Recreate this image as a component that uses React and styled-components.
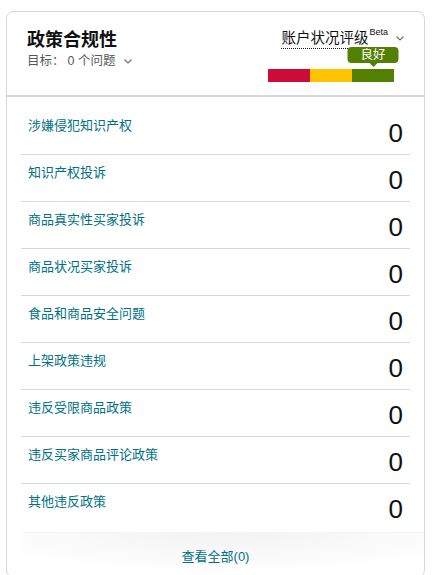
import React from "react";
import styled, { createGlobalStyle } from "styled-components";

const GlobalStyle = createGlobalStyle`
  body {
    margin: 0;
    background: #fff;
    font-family: "Liberation Sans", Arial, "Noto Sans CJK SC", sans-serif;
    color: #0f1111;
  }
`;

const Page = styled.div`
  padding: 11px 0 0 6px;
  width: 419px;
`;

const Card = styled.section`
  border: 1px solid #d5d9d9;
  border-radius: 8px;
  background: #fff;
  overflow: hidden;
`;

const Header = styled.header`
  display: flex;
  justify-content: space-between;
  align-items: flex-start;
  padding: 16px 20px 13px 20px;
  border-bottom: 2px solid #d5d9d9;
`;

const TitleBlock = styled.div`
  display: flex;
  flex-direction: column;
`;

const Title = styled.h2`
  margin: 0;
  font-size: 18px;
  line-height: 24px;
  font-weight: 700;
  color: #0f1111;
`;

const Goal = styled.div`
  display: flex;
  align-items: center;
  font-size: 12.5px;
  line-height: 18px;
  color: #565959;
  span + span {
    margin-left: 3px;
  }
`;

const Chevron = styled.svg`
  width: 8px;
  height: 5px;
  margin-left: ${(p) => p.$gap || 8}px;
  stroke: #6f7373;
  fill: none;
  stroke-width: 1.2;
`;

const RatingBlock = styled.div`
  display: flex;
  flex-direction: column;
  align-items: flex-end;
`;

const RatingLabel = styled.div`
  display: flex;
  align-items: center;
  height: 20px;
`;

const RatingText = styled.span`
  font-size: 14.5px;
  line-height: 20px;
  color: #0f1111;
  border-bottom: 1px dotted #0f1111;
  display: inline-flex;
  align-items: flex-start;
`;

const Beta = styled.sup`
  font-size: 9px;
  line-height: 10px;
  margin-left: 1px;
  margin-top: -1px;
  color: #0f1111;
`;

const Bars = styled.div`
  display: flex;
  margin-top: 21px;
  margin-right: 10px;
`;

const Segment = styled.div`
  position: relative;
  width: 42px;
  height: 13px;
  background: ${(p) => p.$color};
`;

const Badge = styled.div`
  position: absolute;
  bottom: calc(100% + 6px);
  left: 50%;
  transform: translateX(-50%);
  width: 51px;
  height: 16px;
  border-radius: 4px;
  background: #538000;
  color: #fff;
  font-size: 12.5px;
  line-height: 17px;
  text-align: center;
  &::after {
    content: "";
    position: absolute;
    top: 100%;
    left: 50%;
    margin-left: -4px;
    border-left: 4px solid transparent;
    border-right: 4px solid transparent;
    border-top: 4px solid #538000;
  }
`;

const List = styled.ul`
  list-style: none;
  margin: 0;
  padding: 11px 14px 0;
`;

const Row = styled.li`
  display: flex;
  justify-content: space-between;
  align-items: flex-start;
  height: 47px;
  box-sizing: border-box;
  padding: 8px 7px 0;
  border-bottom: 1px solid ${(p) => (p.$last ? "transparent" : "#d5d9d9")};
`;

const Label = styled.a`
  font-size: 13px;
  line-height: 19px;
  color: #007185;
  text-decoration: none;
  cursor: pointer;
`;

const Count = styled.span`
  font-size: 26px;
  line-height: 30px;
  margin-top: 2px;
  color: #0f1111;
`;

const Footer = styled.div`
  position: relative;
  margin-top: 1px;
  height: 45px;
  display: flex;
  align-items: center;
  justify-content: center;
  &::before {
    content: "";
    position: absolute;
    top: 0;
    left: 16px;
    right: 0;
    height: 40px;
    background: radial-gradient(ellipse 65% 100% at 50% 0%, rgba(0, 0, 0, 0.05), rgba(0, 0, 0, 0) 100%);
    border-top: 1px solid rgba(0, 0, 0, 0.04);
  }
`;

const FooterLink = styled.a`
  position: relative;
  font-size: 13px;
  color: #007185;
  text-decoration: none;
  margin-top: 2px;
`;

const items = [
  "涉嫌侵犯知识产权",
  "知识产权投诉",
  "商品真实性买家投诉",
  "商品状况买家投诉",
  "食品和商品安全问题",
  "上架政策违规",
  "违反受限商品政策",
  "违反买家商品评论政策",
  "其他违反政策",
];

const ChevronIcon = ({ gap }) => (
  <Chevron $gap={gap} viewBox="0 0 8 5">
    <path d="M0.5 0.5 L4 4 L7.5 0.5" />
  </Chevron>
);

export default function App() {
  return (
    <Page>
      <GlobalStyle />
      <Card>
        <Header>
          <TitleBlock>
            <Title>政策合规性</Title>
            <Goal>
              <span>目标：</span>
              <span>0 个问题</span>
              <ChevronIcon gap={9} />
            </Goal>
          </TitleBlock>
          <RatingBlock>
            <RatingLabel>
              <RatingText>
                账户状况评级
                <Beta>Beta</Beta>
              </RatingText>
              <ChevronIcon gap={8} />
            </RatingLabel>
            <Bars>
              <Segment $color="#cc0c39" />
              <Segment $color="#ffc400" />
              <Segment $color="#538000">
                <Badge>良好</Badge>
              </Segment>
            </Bars>
          </RatingBlock>
        </Header>
        <List>
          {items.map((label, i) => (
            <Row key={label} $last={i === items.length - 1}>
              <Label>{label}</Label>
              <Count>0</Count>
            </Row>
          ))}
        </List>
        <Footer>
          <FooterLink>查看全部(0)</FooterLink>
        </Footer>
      </Card>
    </Page>
  );
}
